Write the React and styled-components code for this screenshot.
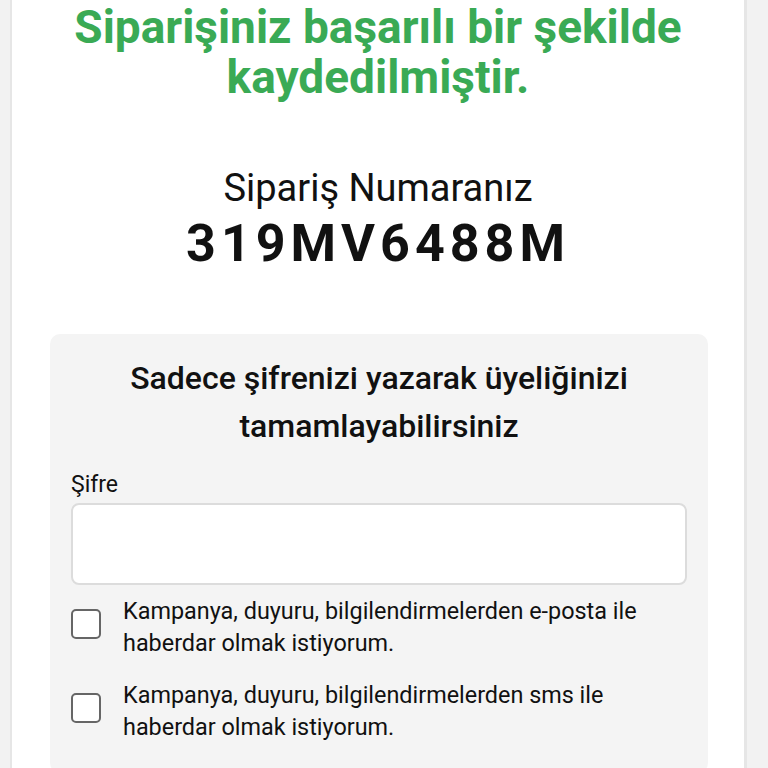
import React from "react";
import styled, { createGlobalStyle } from "styled-components";

const Global = createGlobalStyle`
  html, body { margin: 0; padding: 0; background: #f2f2f2; }
  body { font-family: Roboto, "Noto Sans", Arial, sans-serif; color: #111; }
  * { box-sizing: border-box; }
`;

const Page = styled.div`
  margin-left: 10px;
  width: 737px;
  min-height: 768px;
  background: #fff;
  border-left: 2px solid #e6e6e6;
  border-right: 3px solid #e6e6e6;
  padding: 2px 0 0;
  display: flex;
  flex-direction: column;
  align-items: stretch;
`;

const Title = styled.h1`
  margin: 0;
  color: #3aaa55;
  font-size: 46px;
  font-weight: 700;
  line-height: 50px;
  text-align: center;
`;

const OrderBlock = styled.div`
  margin-top: 64px;
  display: flex;
  flex-direction: column;
  align-items: center;
`;

const OrderLabel = styled.div`
  font-size: 38px;
  line-height: 44px;
  font-weight: 400;
`;

const OrderNumber = styled.div`
  margin-top: 4px;
  font-size: 52px;
  line-height: 60px;
  font-weight: 700;
  letter-spacing: 5px;
`;

const Card = styled.section`
  margin: 60px 36px 0 38px;
  background: #f4f4f4;
  border-radius: 10px;
  padding: 20px 21px 30px;
  display: flex;
  flex-direction: column;
`;

const CardTitle = styled.h2`
  margin: 0;
  font-size: 32px;
  font-weight: 500;
  line-height: 48px;
  text-align: center;
`;

const FieldLabel = styled.label`
  margin-top: 21px;
  font-size: 23px;
  line-height: 28px;
`;

const Input = styled.input`
  margin-top: 4px;
  height: 82px;
  width: 100%;
  border: 2px solid #dcdcdc;
  border-radius: 8px;
  background: #fff;
  outline: none;
  font-size: 20px;
  padding: 0 16px;
`;

const CheckRow = styled.label`
  display: flex;
  align-items: flex-start;
  gap: 22px;
  margin-top: ${(p) => p.$top}px;
  font-size: 23.4px;
  line-height: 32px;
`;

const Box = styled.span`
  flex: 0 0 30px;
  width: 30px;
  height: 30px;
  margin-top: 14px;
  border: 2px solid #666;
  border-radius: 5px;
  background: #fff;
`;

export default function App() {
  return (
    <>
      <Global />
      <Page>
        <Title>
          Siparişiniz başarılı bir şekilde
          <br />
          kaydedilmiştir.
        </Title>
        <OrderBlock>
          <OrderLabel>Sipariş Numaranız</OrderLabel>
          <OrderNumber>319MV6488M</OrderNumber>
        </OrderBlock>
        <Card>
          <CardTitle>
            Sadece şifrenizi yazarak üyeliğinizi
            <br />
            tamamlayabilirsiniz
          </CardTitle>
          <FieldLabel>Şifre</FieldLabel>
          <Input type="password" />
          <CheckRow $top={10}>
            <Box />
            <span>Kampanya, duyuru, bilgilendirmelerden e-posta ile haberdar olmak istiyorum.</span>
          </CheckRow>
          <CheckRow $top={20}>
            <Box />
            <span>Kampanya, duyuru, bilgilendirmelerden sms ile haberdar olmak istiyorum.</span>
          </CheckRow>
        </Card>
      </Page>
    </>
  );
}
